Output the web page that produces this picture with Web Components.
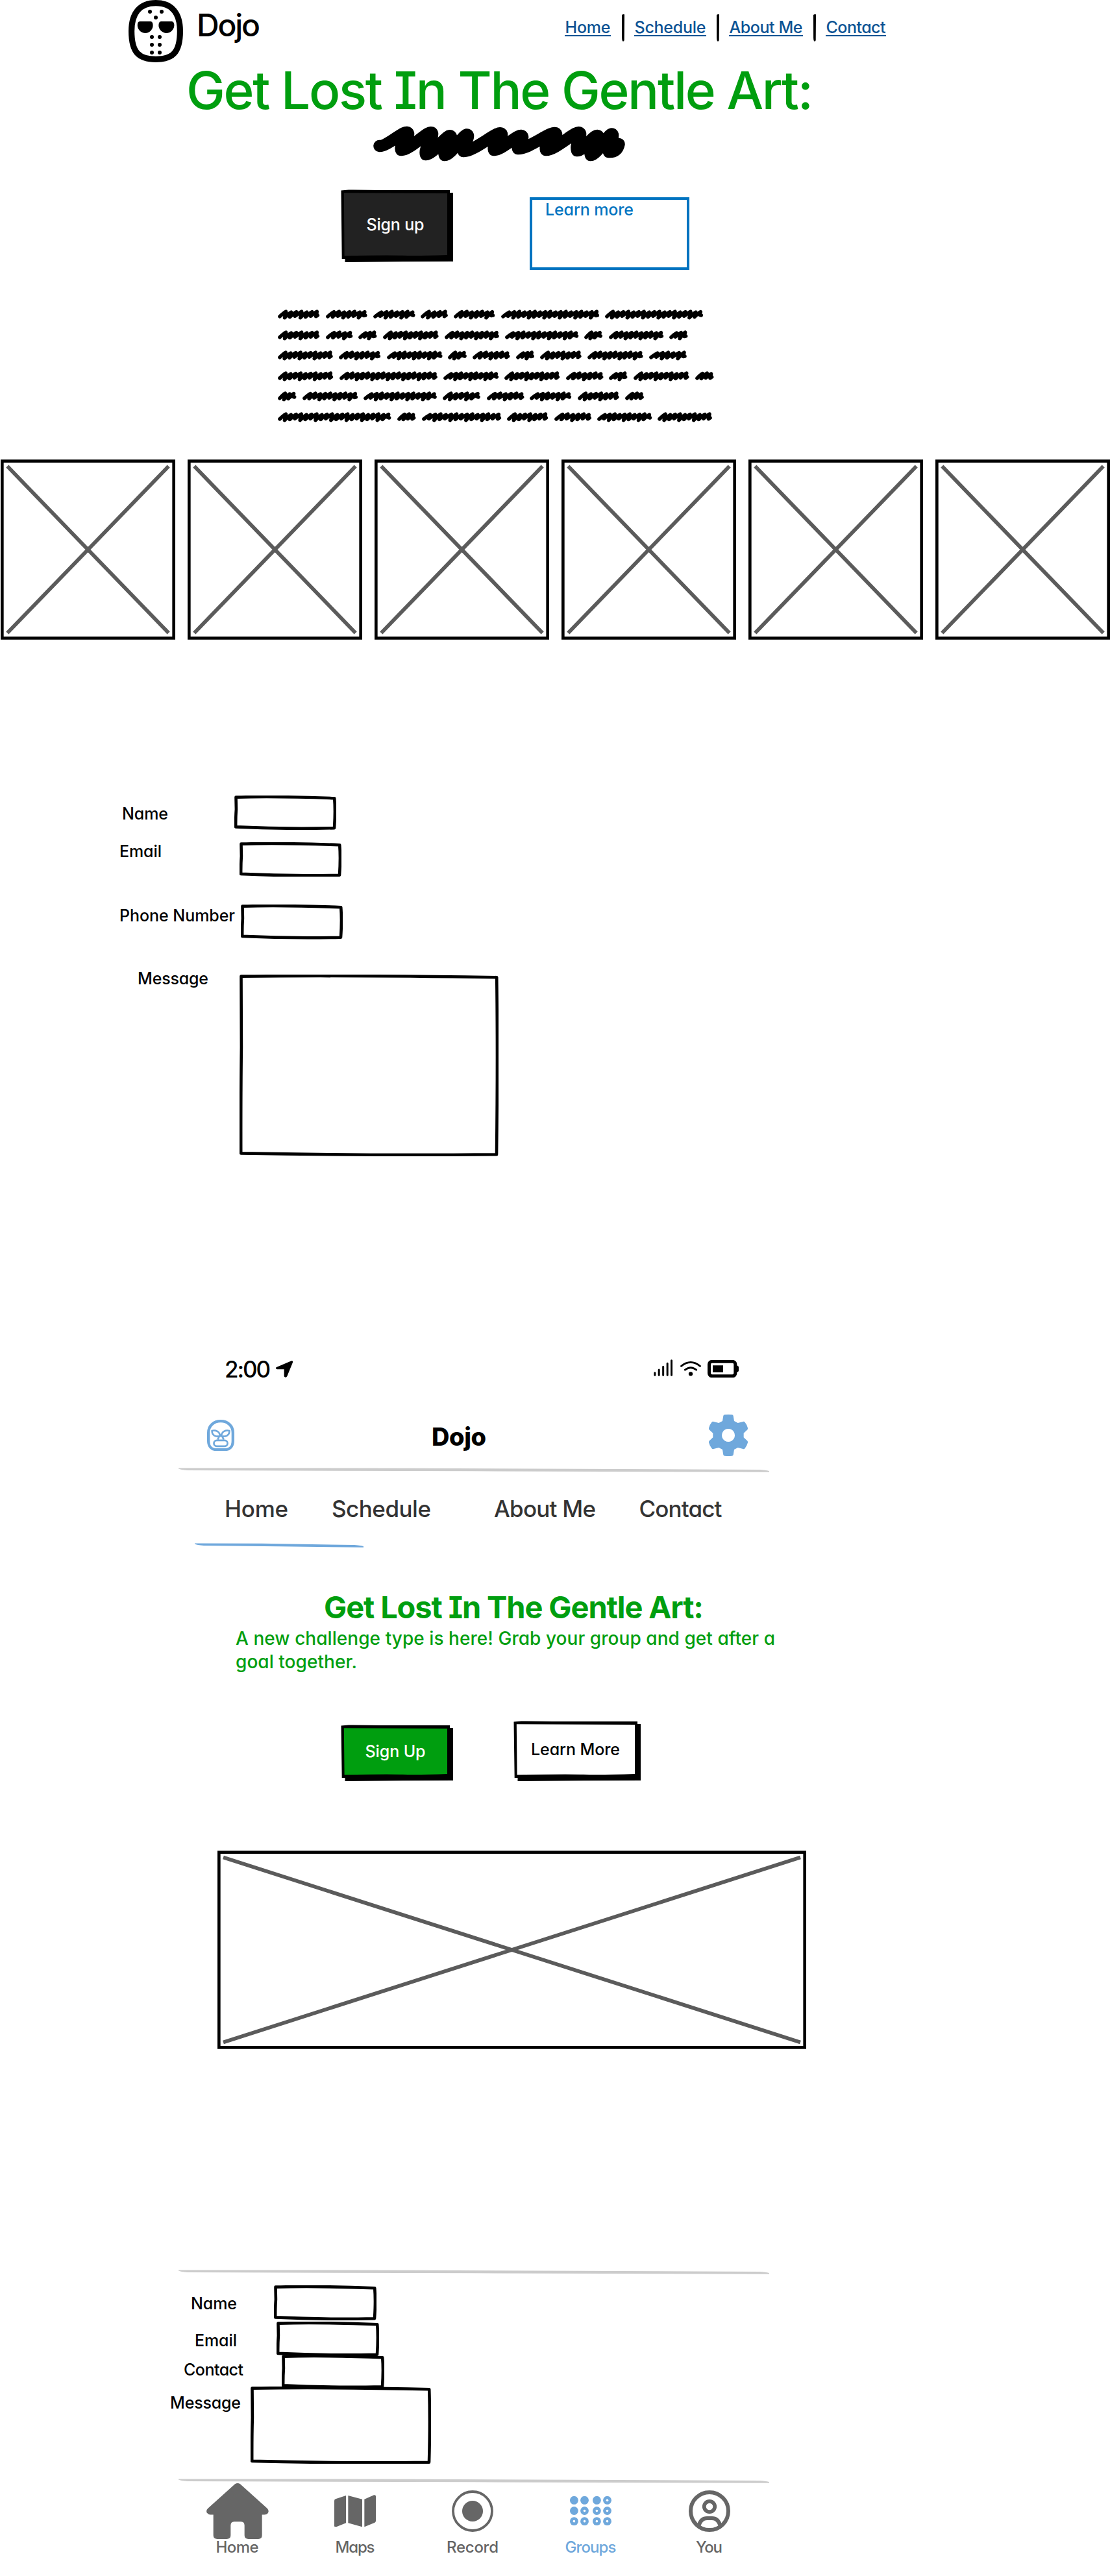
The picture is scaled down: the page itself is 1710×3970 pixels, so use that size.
<!DOCTYPE html>
<html lang="en">
<head>
<meta charset="utf-8">
<title>Dojo</title>
<style>
html,body{margin:0;padding:0;background:#fff}
body{width:1710px;height:3970px;overflow:hidden;color:#000;font-family:Inter,"Open Sans",sans-serif;font-weight:500;font-feature-settings:"cv11","cv08","calt" 0}
</style>
</head>
<body>
<dojo-desktop></dojo-desktop>
<dojo-phone></dojo-phone>
<script>
class Base extends HTMLElement{
  paint(html){
    if(!this.shadowRoot) this.attachShadow({mode:'open'});
    this.shadowRoot.innerHTML=html;
  }
  num(name,d){return parseFloat(this.getAttribute(name)??d)}
}

// A line of text tracked out to a set measure.
customElements.define('ink-text',class extends Base{
  connectedCallback(){
    const w=this.num('w',100),s=this.num('size',25);
    this.paint(`<style>:host{display:block;flex:none;width:${w}px;height:${s}px;font-size:${s}px;line-height:${s+2.6}px;white-space:pre}span{display:inline-block;white-space:pre}</style><span><slot></slot></span>`);
    const span=this.shadowRoot.querySelector('span'),n=this.textContent.length;
    span.style.letterSpacing=((w-span.getBoundingClientRect().width)/(n-1))+'px';
  }
});

// Hand-drawn rectangle, used as a form field.
customElements.define('sketch-field',class extends Base{
  connectedCallback(){
    const w=this.num('w',157),h=this.num('h',53);
    this.paint(`<style>:host{display:block;flex:none;width:${w}px;height:${h}px}svg{display:block}</style>
    <svg width="${w}" height="${h}"><path d="M2.5 2.6 Q${w*.45} 1 ${w-2.8} 4.2 Q${w-1.2} ${h*.45} ${w-3} ${h-2.8} Q${w*.5} ${h-1} 2.2 ${h-4.6} Q2 ${h*.65} 2.9 ${h*.4}Z" fill="#fff" stroke="#000" stroke-width="4.6" stroke-linejoin="round"/></svg>`);
  }
});

customElements.define('sketch-button',class extends Base{
  connectedCallback(){
    const w=this.num('w',173),h=this.num('h',112),f=this.getAttribute('fill');
    this.paint(`<style>:host{display:grid;flex:none;width:${w}px;height:${h}px}svg,div{grid-area:1/1}div{display:flex;align-items:center;justify-content:center;padding:0 5px 5px 0}</style>
    <svg width="${w}" height="${h}"><path d="M6.5 5H${w}V${h-1}L${w*.55} ${h-.8}L6.5 ${h}Z"/><path d="M.5 1.5L12 .4Q40 .3 60 1H${w-5}V${h-5}H1.7Z"/><path d="M4.8 5.2L${w-9} 6V${h-11}Q${w*.7} ${h-9.6} ${w*.55} ${h-10.2}T5.6 ${h-9.8}Z" fill="${f}"/></svg><div><slot></slot></div>`);
  }
});

customElements.define('image-box',class extends Base{
  connectedCallback(){
    const w=this.num('w',269),h=this.num('h',278),dx=this.num('dx',10.3);
    this.paint(`<style>:host{display:block;flex:none;width:${w}px;height:${h}px}svg{display:block}</style>
    <svg width="${w}" height="${h}"><path d="M${dx} 10.6L${w-dx} ${h-10.6}M${w-dx} 10.6L${dx} ${h-10.6}" stroke="#5b5b5b" stroke-width="5.8"/><rect x="2.3" y="2.6" width="${w-4.6}" height="${h-5.2}" fill="none" stroke="#000" stroke-width="4.7"/></svg>`);
  }
});

customElements.define('sketch-rule',class extends Base{
  connectedCallback(){
    const w=this.num('w',910),c=this.getAttribute('color')||'#ccc';
    this.paint(`<style>:host{display:block;width:${w}px;height:7px}svg{display:block}</style>
    <svg width="${w}" height="7"><path d="M0 .4L${w*.4} .7L${w-14} 3Q${w-3} 3.8 ${w} 5.3V6.8L${w*.5} 5.3L14 4Q3 3 0 1.4Z" fill="${c}"/></svg>`);
  }
});

// One scribbled line of filler words; each entry is a word width.
customElements.define('scribble-line',class extends Base{
  connectedCallback(){
    const words=this.getAttribute('words').split(' ').map(Number);
    const word=(w,k)=>{
      const r=3,n=Math.max(3,Math.round((w-8)/8)),step=(w-2*r-2)/n;
      let x=r,d=`M${r} 10.8`;
      for(let i=0;i<n;i++){
        const top=3.2+((i*5+k)%3)*.5,bot=12.6-((i*7+k)%3)*1.2;
        const tx=Math.min(x+step+1.5,w-r-1);
        d+=`Q${x+step*.7} ${top+2} ${tx} ${top}`;
        x+=step;
        d+=`L${Math.min(x-.5,w-r)} ${i==n-1?bot-2:bot}`;
      }
      d+=`L${w-r} 9`;
      return `<svg width="${w}" height="16"><path d="${d}" fill="none" stroke="#000" stroke-width="5.6" stroke-linecap="round" stroke-linejoin="round"/></svg>`;
    };
    this.paint(`<style>:host{display:flex;gap:9.1px;height:16px}svg{flex:none;overflow:visible}</style>${words.map(word).join('')}`);
  }
});

customElements.define('scribble-title',class extends Base{
  connectedCallback(){
    const p=[[584.5,225],[628,204],[618,231],[665,204],[656,238],[694,209],[685,239],[720,207],[714,233],[772,205],[761,231],[804,209],[798,229],[856,205],[841,231],[893,204],[889,232],[921,209],[910,239],[943,206],[938,234]].map(a=>[a[0]-573,a[1]-194]);
    let d=`M${p[0]}`;
    for(let i=1;i<p.length;i++){
      const [a,b]=p[i-1],[x,y]=p[i];
      if(i%2) d+=`C${a+(x-a)*.3} ${b+1} ${x-2} ${y-8} ${x+1} ${y+2}`;
      else d+=`C${a+2} ${b+10} ${x-3} ${y-10} ${x} ${y}`;
    }
    d+='Q378 41 380.5 28';
    this.paint(`<style>:host{display:block;width:392px;height:56px}svg{display:block}</style><svg width="392" height="56"><path d="${d}" fill="none" stroke="#000" stroke-width="18.5" stroke-linecap="round" stroke-linejoin="round"/></svg>`);
  }
});

const ICONS={
  hockey:[84,96,'0 0 84 96','<path d="M42 4.6C66 4.6 79.4 20 79.4 48C79.4 82 67 91.4 42 91.4C17 91.4 4.6 82 4.6 48C4.6 20 18 4.6 42 4.6Z" fill="none" stroke="#000" stroke-width="9.2"/><path d="M17.5 33H34Q37.7 33 37.6 40C37 46.5 31.5 51 26 51C20 51 14.5 46.5 13.8 40Q13.5 33 17.5 33Z"/><path d="M50 33H66.6Q70.5 33 70.4 40C69.5 46.5 64 51 58.5 51C52.8 51 47 46.5 46.4 40Q46.3 33 50 33Z"/><g><circle cx="33" cy="18" r="3"/><circle cx="51" cy="18" r="3"/><circle cx="42" cy="27" r="3"/><circle cx="36" cy="57" r="3"/><circle cx="48" cy="57" r="3"/><circle cx="36" cy="69" r="3"/><circle cx="48" cy="69" r="3"/><circle cx="36" cy="81" r="3"/><circle cx="48" cy="81" r="3"/></g>'],
  luchador:[42,48.3,'0 0 126 145','<g fill="none" stroke="#6fa8dc"><path stroke-width="13" d="M6.5 60C6.5 28 31 6.5 63 6.5S119.5 28 119.5 60V98C119.5 124 104 138.5 82 138.5H44C22 138.5 6.5 124 6.5 98Z"/><g stroke-width="8"><path d="M23 51C40 47 59 54 60 76C40 80 21 72 23 51ZM103 51C86 47 67 54 66 76C86 80 105 72 103 51Z"/><path d="M56 77L49 92M70 77L77 92"/><rect x="31.5" y="95.5" width="63" height="27" rx="13"/></g></g>'],
  arrow:[26.3,26,'0 0 79 78','<path d="M72 1Q80-1 78 8L52 72Q48 79 41 76Q38 75 38 70V40H6Q-1 38 0 33Q1 30 5 29Z"/>'],
  signal:[30,26.3,'0 0 90 79','<path d="M5.5 62V73M24.5 48V73M44 34V73M63.5 19V73M82.5 5V73" stroke="#000" stroke-width="9" stroke-linecap="round"/>'],
  wifi:[32,23,'0 0 96 69','<path d="M4.5 22Q48-13 91.5 22M22 39.5Q48 18.5 74 39.5" fill="none" stroke="#000" stroke-width="8.5" stroke-linecap="round"/><circle cx="48" cy="58" r="9.5"/>'],
  battery:[48,27,'0 0 144 81','<rect x="7.5" y="7" width="121" height="67" rx="13" fill="none" stroke="#000" stroke-width="15"/><path d="M24 25H72V57H24ZM132 25Q144 26 144 34V48Q144 56 132 57Z"/>'],
  gear:[60,64,'0 0 180 192','<path fill="#6fa8dc" fill-rule="evenodd" d="M63 30L67 6Q68 1 73 1Q90-1 107 1Q112 1 113 6L117 30L134 39L158 33Q163 31 167 36Q176 47 180 62Q181 67 177 71L161 86V106L177 121Q181 125 180 130Q176 145 167 156Q163 161 158 159L134 153L117 162L113 187Q112 191 107 191Q90 193 73 191Q68 191 67 187L63 162L46 153L22 159Q17 161 13 156Q4 145 0 130Q-1 125 3 121L19 106V86L3 71Q-1 67 0 62Q4 47 13 36Q17 31 22 33L46 39ZM90 66a30 30 0 1 0 .1 0Z"/>'],
  home:[96,86,'0 0 288 257','<path fill="#666" d="M132 4Q144-4 156 4L281 116Q292 128 283 139Q279 145 268 145H257V240Q257 257 240 257H194Q176 257 176 240V195Q176 177 160 177H128Q112 177 112 195V240Q112 257 94 257H50Q32 257 32 240V145H18Q8 144 2 136Q-3 125 7 116Z"/>'],
  maps:[64,49.3,'0 0 192 148','<path fill="#666" d="M0 27Q0 21 6 19L54 3V130L9 148Q0 149 0 143ZM64 3L129 20V148L64 130ZM139 20L183 1Q192-1 192 7V121Q192 125 187 128L139 148Z"/>'],
  record:[64,64,'0 0 64 64','<circle cx="32" cy="32" r="30" fill="none" stroke="#666" stroke-width="3.8"/><circle cx="32" cy="32" r="16" fill="#666"/>'],
  groups:[64,45,'0 0 64 44.6',[6.3,22.3,38.3].map((y,r)=>[6.4,22.5,41.4,57.5].map((x,c)=>`<circle cx="${x}" cy="${y}" r="6.4" fill="#6fa8dc"/>`+((r==0&&c<3)||(r==1&&c==0)?'':`<circle cx="${x}" cy="${y}" r="1.8" fill="#fff"/>`)).join('')).join('')],
  you:[64,64,'0 0 64 64','<g fill="none" stroke="#666"><circle cx="32" cy="32" r="29" stroke-width="6"/><circle cx="32" cy="25" r="8.2" stroke-width="5.8"/><path d="M15.5 54Q19 43 28 43H36Q45 43 48.5 54" stroke-width="6"/></g>']
};
customElements.define('dojo-icon',class extends Base{
  connectedCallback(){
    const [w,h,vb,body]=ICONS[this.getAttribute('name')];
    this.paint(`<style>:host{display:block;flex:none;width:${w}px;height:${h}px}svg{display:block}</style><svg width="${w}" height="${h}" viewBox="${vb}" preserveAspectRatio="none">${body}</svg>`);
  }
});

// Label plus field on one row.
customElements.define('field-row',class extends Base{
  connectedCallback(){
    const a=n=>this.getAttribute(n);
    this.paint(`<style>:host{display:flex;align-items:flex-start}
      ink-text{margin:${a('ly')}px 0 0 ${a('lx')}px}
      sketch-field{margin:${a('fy')||0}px 0 0 ${a('gap')}px}</style>
      <ink-text w="${a('lw')}">${a('label')}</ink-text><sketch-field w="${a('w')}" h="${a('h')}"></sketch-field>`);
  }
});

customElements.define('link-bar',class extends Base{
  connectedCallback(){
    this.paint(`<style>:host{display:flex;align-items:flex-start;color:#0b5394}
      a{display:block;margin-top:28.6px;border-bottom:2px solid #0b5394;color:inherit}
      ink-text{margin-left:1px}
      svg{display:block;flex:none;margin:22px 15px 0 17px}
      svg~svg{margin-left:16px}</style>
      ${[['Home',70],['Schedule',110],['About Me',113],['Contact',92]].map(([t,w])=>`<a><ink-text w="${w}">${t}</ink-text></a>`).join('<svg width="4" height="42"><path d="M0 1Q2-.5 4 .3L3.7 40Q3 42.500 1.300 41.500Q0 40 .1 36Z" fill="#000"/></svg>')}`);
  }
});

customElements.define('tab-item',class extends Base{
  connectedCallback(){
    this.paint(`<style>:host{display:flex;flex-direction:column;align-items:center;color:${this.getAttribute('color')||'#666'}}
      .i{height:86px;display:flex;align-items:center}</style>
      <div class="i"><dojo-icon name="${this.getAttribute('icon')}"></dojo-icon></div>
      <ink-text size="24" w="${this.getAttribute('w')}">${this.textContent}</ink-text>`);
  }
});

customElements.define('dojo-desktop',class extends Base{
  connectedCallback(){
    this.paint(`<style>
      :host{display:flex;flex-direction:column;width:1710px}
      header,.cta,.gallery{display:flex;align-items:flex-start}
      header{height:96px;padding-left:198px}
      .brand{margin:14.4px 0 0 21px}
      link-bar{margin-left:468.5px}
      .title{margin:2px 0 0 287px;color:#009e0f}
      scribble-title{margin:16px 0 0 573px}
      .cta{margin:42px 0 0 525px}
      .cta .go{color:#fff}
      .more{box-sizing:border-box;width:246px;height:112px;margin:12px 0 0 118px;border:4px solid #0073c0;color:#0073c0;padding:2px 0 0 20px}
      .copy{display:flex;flex-direction:column;gap:15.6px;margin:61px 0 0 428.3px}
      .gallery{gap:19px;margin-top:57px;padding-left:1px}
      form{display:flex;flex-direction:column;margin:240px 0 0}
    </style>
    <header><dojo-icon name="hockey"></dojo-icon><ink-text class="brand" size="48" w="98">Dojo</ink-text><link-bar></link-bar></header>
    <ink-text class="title" size="80" w="966">Get Lost In The Gentle Art:</ink-text>
    <scribble-title></scribble-title>
    <div class="cta"><sketch-button w="173" h="112" fill="#222"><ink-text class="go" w="89">Sign up</ink-text></sketch-button><div class="more"><ink-text w="136">Learn more</ink-text></div></div>
    <div class="copy">${[
      '64.3 63.8 64.7 42 63.4 151.3 151.3',
      '64.3 41.5 28.6 85.7 84 113.4 28.2 84.4 28.6',
      '84.8 64.3 85.7 29 57.6 28.2 63.8 85.7 58',
      '85.3 151 85.3 85.3 57.6 28.6 85.7 28.6',
      '28.6 85.3 113 58 57.6 64.3 63.8 29',
      '174.6 28.6 122.3 63.4 57.2 84.4 84'].map(s=>`<scribble-line words="${s}"></scribble-line>`).join('')}</div>
    <div class="gallery">${'<image-box></image-box>'.repeat(6)}</div>
    <form>
      <field-row label="Name" lx="188" ly="14.6" lw="71" gap="102" w="157" h="53"></field-row>
      <field-row style="margin-top:19px" label="Email" lx="184" ly="0.6" lw="65" gap="119.5" w="157" h="53.5"></field-row>
      <field-row style="margin-top:43px" label="Phone Number" lx="184" ly="4" lw="178" gap="9" w="157" h="53.5"></field-row>
      <field-row style="margin-top:46.6px" label="Message" lx="212" ly="0" lw="109" gap="47.5" fy="7.4" w="399" h="280"></field-row>
    </form>`);
  }
});

customElements.define('dojo-phone',class extends Base{
  connectedCallback(){
    this.paint(`<style>
      :host{display:flex;flex-direction:column;width:1710px;margin-top:310px}
      .status,.bar,.tabs,.cta{display:flex;align-items:flex-start}
      .status{height:35px;padding-left:346px}
      .bar{height:64px;margin-top:53px;padding-left:319px;font-weight:800}
      .tabs{height:35px;margin-top:38px;padding-left:346px;color:#333}
      .title{margin:67.3px 0 0 499px;font-weight:700;color:#009e0f}
      .copy{display:flex;flex-direction:column;gap:8.3px;margin:10.9px 0 0 363px;color:#009e0f}
      .cta{margin:77.2px 0 0 525px}
      image-box{margin:107px 0 0 335px}
      .ruled{margin-left:274.5px}
      form{display:flex;flex-direction:column;margin:16.5px 0 0}
      nav{display:grid;grid-template-columns:182px 181px 181px 183px 182px;margin:-.5px 0 0 274.5px}
    </style>
    <div class="status"><ink-text size="35" w="71">2:00</ink-text>
      <dojo-icon name="arrow" style="margin:5px 0 0 8px"></dojo-icon>
      <dojo-icon name="signal" style="margin:3px 0 0 556px"></dojo-icon>
      <dojo-icon name="wifi" style="margin:6.5px 0 0 10.5px"></dojo-icon>
      <dojo-icon name="battery" style="margin:4.3px 0 0 10px"></dojo-icon></div>
    <div class="bar"><dojo-icon name="luchador" style="margin-top:7.6px"></dojo-icon>
      <ink-text size="38" w="84" style="margin:14px 0 0 304px">Dojo</ink-text>
      <dojo-icon name="gear" style="margin-left:343px"></dojo-icon></div>
    <sketch-rule class="ruled" style="margin-top:18px"></sketch-rule>
    <div class="tabs"><ink-text size="35" w="98">Home</ink-text><ink-text size="35" w="153" style="margin-left:67px">Schedule</ink-text><ink-text size="35" w="157" style="margin-left:97px">About Me</ink-text><ink-text size="35" w="128" style="margin-left:66.5px">Contact</ink-text></div>
    <sketch-rule w="260" color="#6fa8dc" style="margin:36px 0 0 300px"></sketch-rule>
    <ink-text class="title" size="47" w="585">Get Lost In The Gentle Art:</ink-text>
    <div class="copy"><ink-text size="28" w="831">A new challenge type is here! Grab your group and get after a</ink-text><ink-text size="28" w="187">goal together.</ink-text></div>
    <div class="cta"><sketch-button style="margin-top:6px;color:#fff" w="173" h="87" fill="#009e0f"><ink-text w="93">Sign Up</ink-text></sketch-button>
      <sketch-button style="margin-left:93px" w="196" h="93" fill="#fff"><ink-text w="137">Learn More</ink-text></sketch-button></div>
    <image-box w="907" h="306" dx="9"></image-box>
    <sketch-rule class="ruled" style="margin-top:340.5px"></sketch-rule>
    <form>
      <field-row style="height:54px" label="Name" lx="294" ly="15.3" lw="71" gap="57" w="158" h="54"></field-row>
      <field-row style="height:53px;margin-top:2px;position:relative;z-index:1" label="Email" lx="300" ly="16.6" lw="65" gap="61" w="158" h="53.5"></field-row>
      <field-row style="height:47px" label="Contact" lx="283" ly="8" lw="92" gap="59" fy="-2" w="158" h="52"></field-row>
      <field-row style="height:119px;position:relative" label="Message" lx="262" ly="12.6" lw="109" gap="15" w="278" h="119.5"></field-row>
    </form>
    <sketch-rule class="ruled" style="margin-top:23.5px"></sketch-rule>
    <nav><tab-item icon="home" w="66">Home</tab-item><tab-item icon="maps" w="61">Maps</tab-item><tab-item icon="record" w="80">Record</tab-item><tab-item icon="groups" color="#6fa8dc" w="79">Groups</tab-item><tab-item icon="you" w="41">You</tab-item></nav>`);
  }
});
</script>
</body>
</html>
